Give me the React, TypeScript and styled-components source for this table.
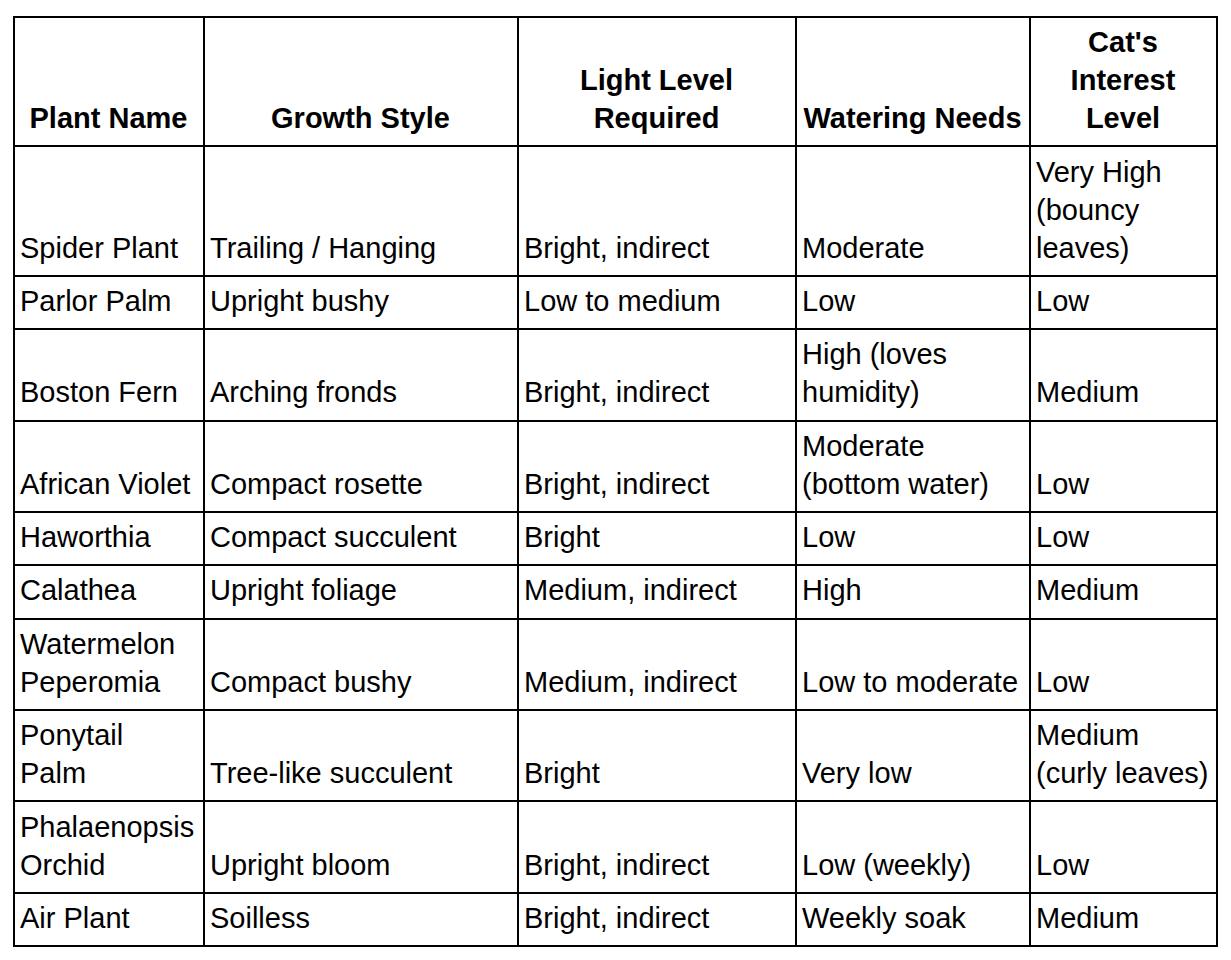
import React from "react";
import styled, { createGlobalStyle } from "styled-components";

type Plant = {
  name: string;
  growth: string;
  light: string;
  water: string;
  interest: string;
};

const headers = [
  "Plant Name",
  "Growth Style",
  "Light Level Required",
  "Watering Needs",
  "Cat's Interest Level",
];

const plants: Plant[] = [
  {
    name: "Spider Plant",
    growth: "Trailing / Hanging",
    light: "Bright, indirect",
    water: "Moderate",
    interest: "Very High (bouncy leaves)",
  },
  {
    name: "Parlor Palm",
    growth: "Upright bushy",
    light: "Low to medium",
    water: "Low",
    interest: "Low",
  },
  {
    name: "Boston Fern",
    growth: "Arching fronds",
    light: "Bright, indirect",
    water: "High (loves humidity)",
    interest: "Medium",
  },
  {
    name: "African Violet",
    growth: "Compact rosette",
    light: "Bright, indirect",
    water: "Moderate (bottom water)",
    interest: "Low",
  },
  {
    name: "Haworthia",
    growth: "Compact succulent",
    light: "Bright",
    water: "Low",
    interest: "Low",
  },
  {
    name: "Calathea",
    growth: "Upright foliage",
    light: "Medium, indirect",
    water: "High",
    interest: "Medium",
  },
  {
    name: "Watermelon Peperomia",
    growth: "Compact bushy",
    light: "Medium, indirect",
    water: "Low to moderate",
    interest: "Low",
  },
  {
    name: "Ponytail Palm",
    growth: "Tree-like succulent",
    light: "Bright",
    water: "Very low",
    interest: "Medium (curly leaves)",
  },
  {
    name: "Phalaenopsis Orchid",
    growth: "Upright bloom",
    light: "Bright, indirect",
    water: "Low (weekly)",
    interest: "Low",
  },
  {
    name: "Air Plant",
    growth: "Soilless",
    light: "Bright, indirect",
    water: "Weekly soak",
    interest: "Medium",
  },
];

const GlobalStyle = createGlobalStyle`
  html, body {
    margin: 0;
    padding: 0;
    background: #fff;
  }
  body {
    font-family: "Liberation Sans", Arial, sans-serif;
    color: #000;
  }
`;

const Page = styled.div`
  padding: 16px 13px 15px;
`;

const Table = styled.div`
  display: grid;
  grid-template-columns: 188px 312px 276px 232px 185px;
  gap: 2px;
  padding: 2px;
  width: fit-content;
  background: #000;
`;

const Cell = styled.div<{ $header?: boolean }>`
  display: flex;
  flex-direction: column;
  justify-content: flex-end;
  background: #fff;
  padding: 5.2px 6px 8.2px 5px;
  font-size: 29px;
  line-height: 38px;
  font-weight: ${(p) => (p.$header ? 700 : 400)};
  text-align: ${(p) => (p.$header ? "center" : "left")};
`;

const App: React.FC = () => {
  return (
    <Page>
      <GlobalStyle />
      <Table>
        {headers.map((h) => (
          <Cell key={h} $header>
            {h}
          </Cell>
        ))}
        {plants.map((p) => (
          <React.Fragment key={p.name}>
            <Cell>{p.name}</Cell>
            <Cell>{p.growth}</Cell>
            <Cell>{p.light}</Cell>
            <Cell>{p.water}</Cell>
            <Cell>{p.interest}</Cell>
          </React.Fragment>
        ))}
      </Table>
    </Page>
  );
};

export default App;
